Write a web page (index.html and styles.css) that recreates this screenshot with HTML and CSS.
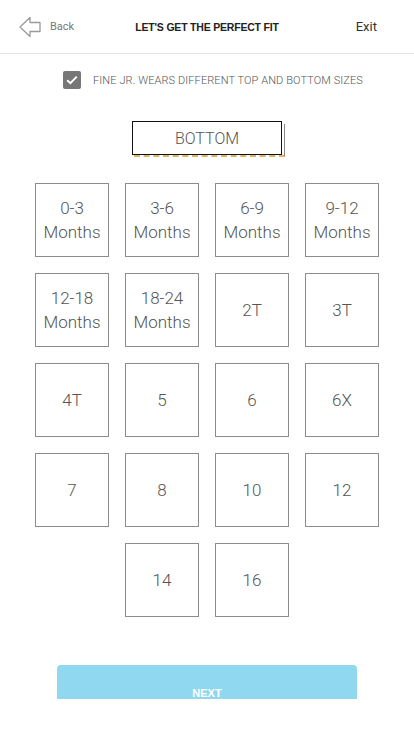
FILE: index.html
```html
<!DOCTYPE html>
<html lang="en">
<head>
  <meta charset="UTF-8" />
  <meta name="viewport" content="width=device-width, initial-scale=1.0"/>
  <title>Let's Get The Perfect Fit</title>
  <link rel="stylesheet" href="styles.css">
</head>
<body>

  <header class="top-bar">
    <a class="back" href="#">
      <svg width="22" height="22" viewBox="0 0 22 22">
        <path d="M1 11 L11 1.5 L11 6.5 L21 6.5 L21 15.5 L11 15.5 L11 20.5 Z" fill="none" stroke="#9a9a9a" stroke-width="1.3" stroke-linejoin="round"/>
      </svg>
      <span>Back</span>
    </a>
    <h1 class="title">LET'S GET THE PERFECT FIT</h1>
    <a class="exit" href="#">Exit</a>
  </header>

  <label class="split-option">
    <span class="check">
      <svg width="12" height="10" viewBox="0 0 12 10">
        <path d="M1.2 5.2 L4.4 8.2 L10.8 1.6" fill="none" stroke="#fff" stroke-width="2"/>
      </svg>
    </span>
    <span>FINE JR. WEARS DIFFERENT TOP AND BOTTOM SIZES</span>
  </label>

  <div class="tab-wrap">
    <button class="tab">BOTTOM</button>
  </div>

  <section class="sizes" id="sizes"></section>

  <div class="next-wrap">
    <button class="next">NEXT</button>
  </div>

  <script>
    const sizes = [
      "0-3<br>Months", "3-6<br>Months", "6-9<br>Months", "9-12<br>Months",
      "12-18<br>Months", "18-24<br>Months", "2T", "3T",
      "4T", "5", "6", "6X",
      "7", "8", "10", "12",
      "14", "16"
    ];

    const grid = document.getElementById("sizes");
    sizes.forEach(size => {
      const tile = document.createElement("button");
      tile.className = "size";
      tile.innerHTML = size;
      grid.appendChild(tile);
    });
  </script>
</body>
</html>
```

FILE: styles.css
```css
body {
  font-family: Roboto, 'Liberation Sans', sans-serif;
  background: #fff;
  margin: 0;
  padding: 0;
  color: #555;
}
.top-bar {
  height: 54px;
  border-bottom: 1px solid #e6e6e6;
  box-sizing: border-box;
  display: grid;
  grid-template-columns: 1fr auto 1fr;
  align-items: center;
  padding: 0 19px;
}
.back {
  display: flex;
  align-items: center;
  gap: 9px;
  text-decoration: none;
  color: #777;
  font-size: 11px;
}
.title {
  margin: 0;
  font-family: 'Liberation Sans', Arial, sans-serif;
  font-size: 10.5px;
  font-weight: bold;
  letter-spacing: -0.2px;
  color: #222;
}
.exit {
  justify-self: end;
  margin-right: 18px;
  text-decoration: none;
  color: #333;
  font-size: 13px;
}
.split-option {
  display: flex;
  justify-content: center;
  align-items: center;
  gap: 12px;
  margin-top: 17px;
  font-size: 11px;
  font-weight: 300;
  letter-spacing: 0.1px;
  color: #555;
  padding-left: 12px;
}
.check {
  width: 18px;
  height: 18px;
  border-radius: 2px;
  background: #777;
  display: flex;
  align-items: center;
  justify-content: center;
}
.tab-wrap {
  display: flex;
  justify-content: center;
  margin-top: 32px;
}
.tab {
  position: relative;
  width: 150px;
  height: 34px;
  background: #fff;
  border: 1px solid #111;
  font-family: Roboto, sans-serif;
  font-size: 16px;
  font-weight: 300;
  color: #555;
  padding: 0;
}
.tab::after {
  content: "";
  position: absolute;
  left: 1px;
  top: 2px;
  right: -4px;
  bottom: -3px;
  border-right: 1px solid #888;
  border-bottom: 2px dashed #d9b765;
  z-index: -1;
}
.sizes {
  width: 344px;
  margin: 28px auto 0;
  display: flex;
  flex-wrap: wrap;
  justify-content: center;
  gap: 16px;
}
.size {
  width: 74px;
  height: 74px;
  background: #fff;
  border: 1px solid #8c8c8c;
  font-family: Roboto, sans-serif;
  font-size: 17px;
  font-weight: 300;
  line-height: 24px;
  color: #555;
  padding: 0;
}
.next-wrap {
  display: flex;
  justify-content: center;
  margin-top: 48px;
}
.next {
  width: 300px;
  height: 34px;
  background: #90d7f0;
  border: none;
  border-radius: 4px 4px 0 0;
  color: #fff;
  font-family: 'Liberation Sans', Arial, sans-serif;
  font-weight: bold;
  font-size: 11px;
  padding: 21px 0 0;
  line-height: 12px;
}
```
